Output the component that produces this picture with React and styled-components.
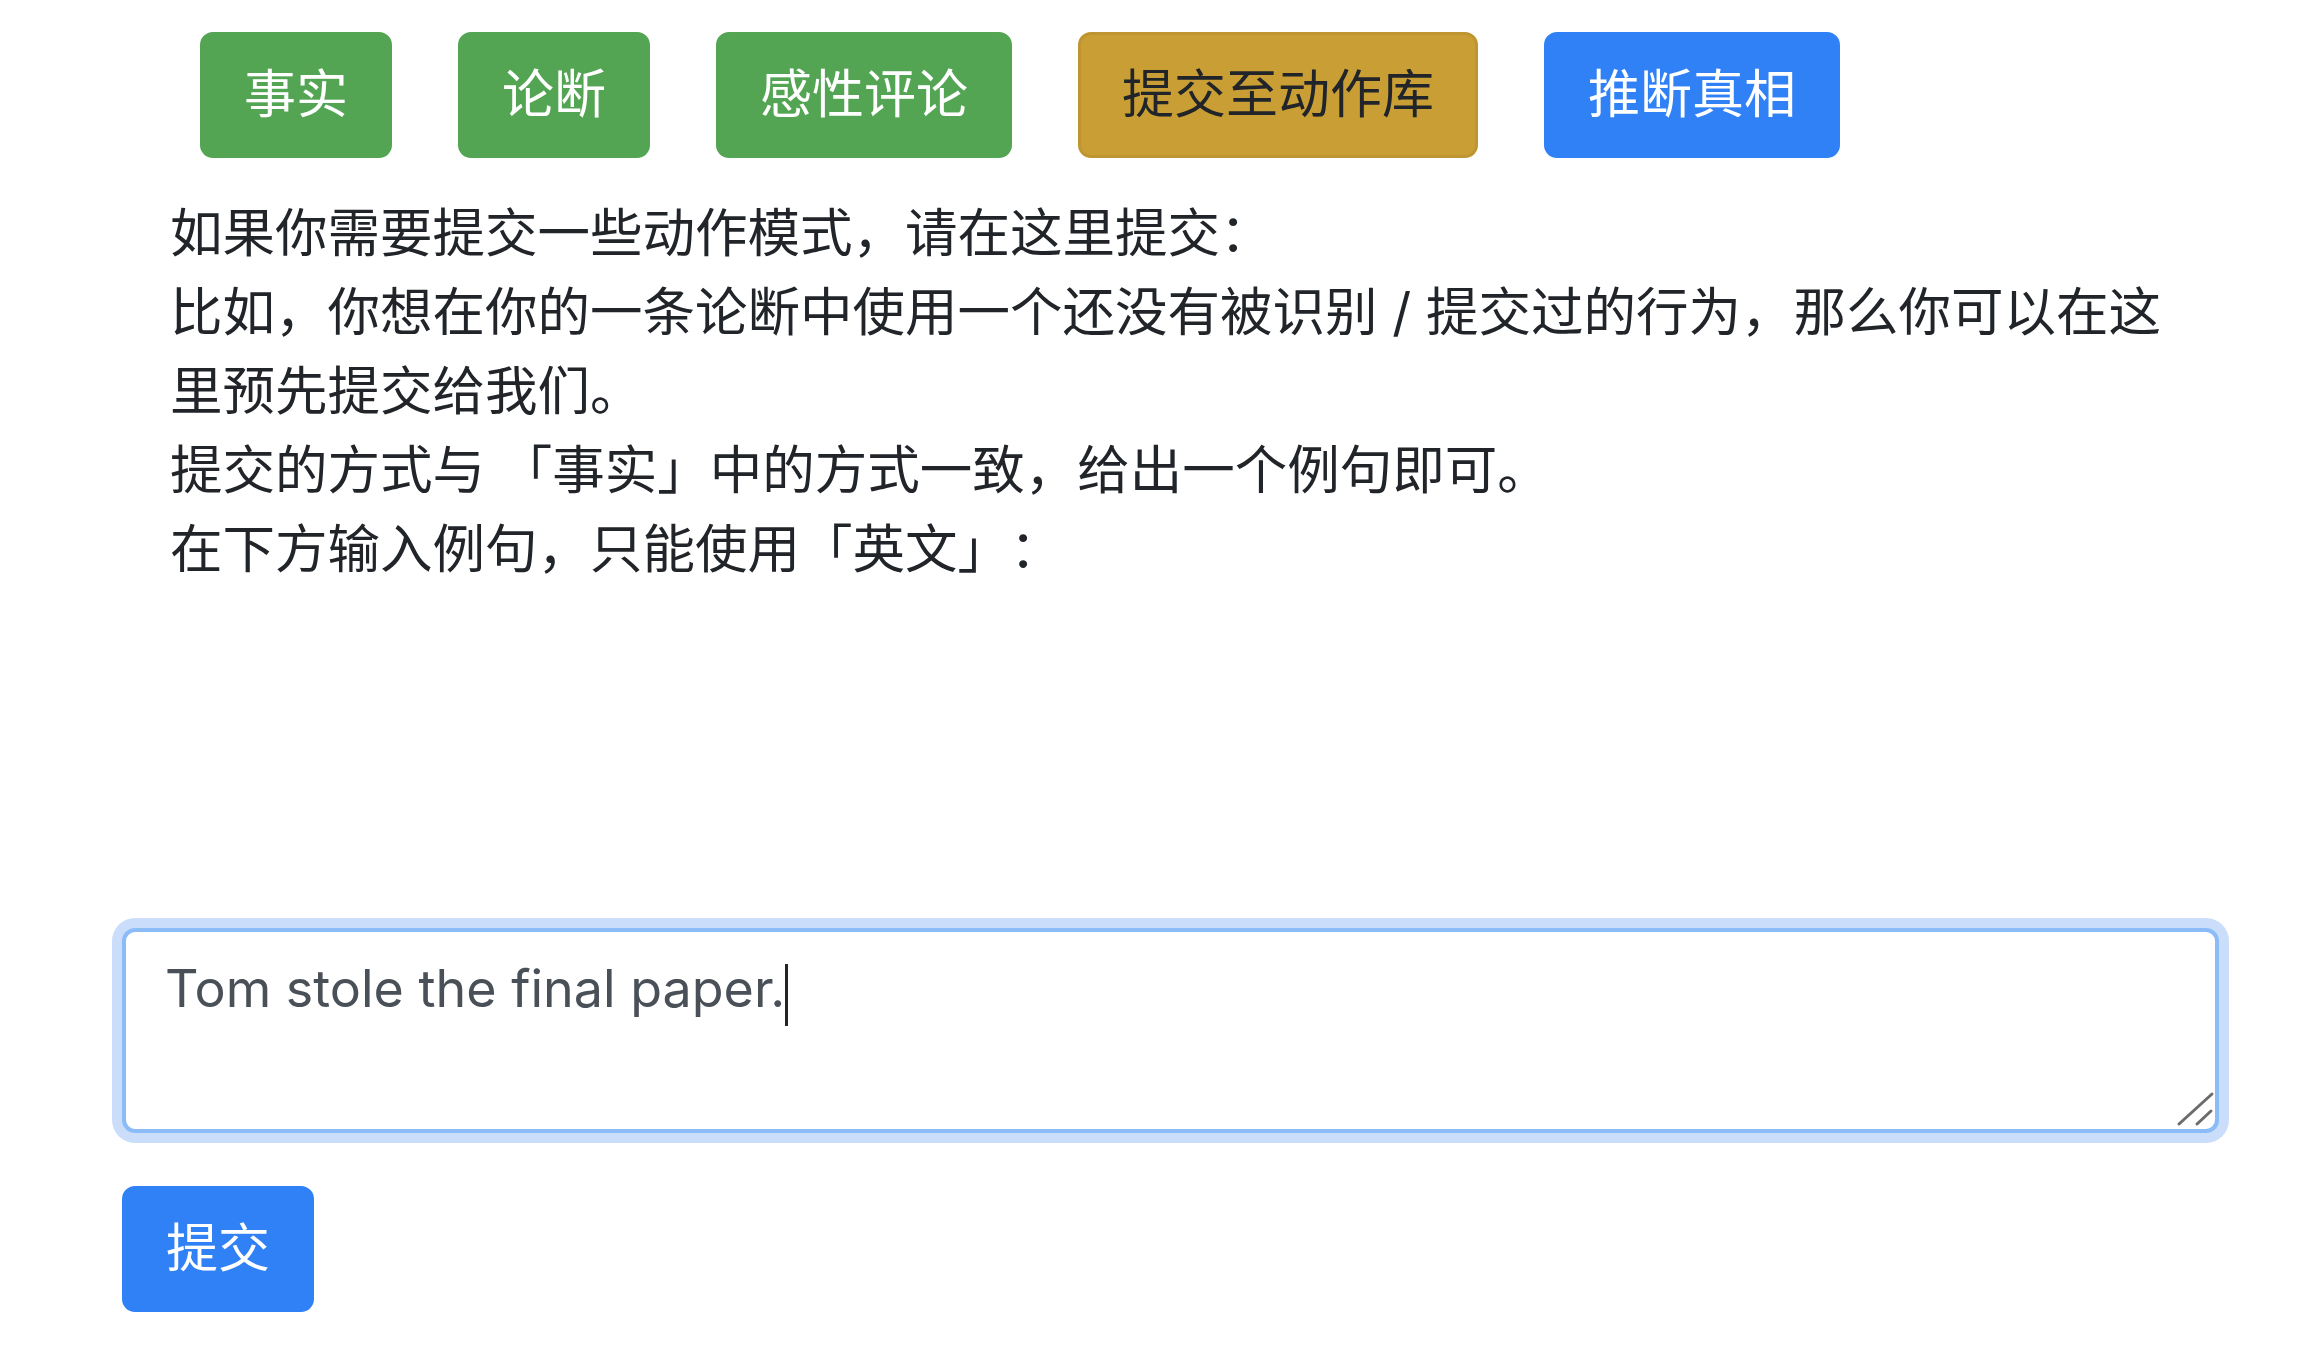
import React from "react";
import styled, { createGlobalStyle } from "styled-components";

const GlobalStyle = createGlobalStyle`
  html, body {
    margin: 0;
    padding: 0;
    background: #ffffff;
  }
  body {
    font-family: Inter, "Noto Sans CJK SC", sans-serif;
    color: #212529;
    text-spacing-trim: space-all;
  }
`;

const Page = styled.div`
  width: 2097px;
  margin-left: 122px;
  padding-top: 32px;
  display: flex;
  flex-direction: column;
`;

const ButtonRow = styled.div`
  display: flex;
  gap: 66px;
  padding-left: 78px;
`;

const variants = {
  success: { bg: "#53a553", border: "#53a553", color: "#ffffff" },
  warning: { bg: "#c99e34", border: "#bf9532", color: "#212529" },
  primary: { bg: "#3080f6", border: "#3080f6", color: "#ffffff" },
};

const Button = styled.button`
  font-family: Inter, "Noto Sans CJK SC", sans-serif;
  font-size: 52px;
  line-height: 78px;
  padding: 21px 41px;
  border: 3px solid ${(p) => variants[p.$variant].border};
  background: ${(p) => variants[p.$variant].bg};
  color: ${(p) => variants[p.$variant].color};
  border-radius: 13px;
  cursor: pointer;
  white-space: nowrap;
`;

const Instructions = styled.div`
  margin-top: 36px;
  padding: 0 48px;
  font-size: 52.5px;
  line-height: 79px;
  color: #212529;
`;

const Line = styled.div``;

const Field = styled.div`
  position: relative;
  margin-top: 339px;
  width: 2097px;
  height: 205px;
`;

const TextArea = styled.textarea`
  box-sizing: border-box;
  display: block;
  width: 100%;
  height: 100%;
  margin: 0;
  padding: 17px 39px 23px;
  font-family: Inter, "Noto Sans CJK SC", sans-serif;
  font-size: 52px;
  line-height: 79px;
  color: #495057;
  background: #ffffff;
  border: 4px solid #8bbcf7;
  border-radius: 13px;
  box-shadow: 0 0 0 10px #cadefb;
  outline: none;
  caret-color: transparent;
  resize: none;
`;

const Caret = styled.span`
  position: absolute;
  left: 663px;
  top: 36px;
  width: 3px;
  height: 62px;
  background: #212529;
  pointer-events: none;
`;

const ResizeGrip = styled.svg`
  position: absolute;
  right: 4px;
  bottom: 4px;
  width: 40px;
  height: 40px;
  pointer-events: none;
`;

const SubmitRow = styled.div`
  margin-top: 53px;
  display: flex;
`;

export default function App() {
  return (
    <>
      <GlobalStyle />
      <Page>
        <ButtonRow>
          <Button $variant="success">事实</Button>
          <Button $variant="success">论断</Button>
          <Button $variant="success">感性评论</Button>
          <Button $variant="warning">提交至动作库</Button>
          <Button $variant="primary">推断真相</Button>
        </ButtonRow>
        <Instructions>
          <Line>如果你需要提交一些动作模式，请在这里提交：</Line>
          <Line>
            比如，你想在你的一条论断中使用一个还没有被识别 / 提交过的行为，那么你可以在这里预先提交给我们。
          </Line>
          <Line>提交的方式与 「事实」中的方式一致，给出一个例句即可。</Line>
          <Line>在下方输入例句，只能使用「英文」：</Line>
        </Instructions>
        <Field>
          <TextArea defaultValue="Tom stole the final paper." />
          <Caret />
          <ResizeGrip viewBox="0 0 40 40">
            <line x1="4" y1="35" x2="37" y2="5" stroke="#6b6b6b" strokeWidth="3" strokeLinecap="round" />
            <line x1="22" y1="35" x2="36" y2="22" stroke="#6b6b6b" strokeWidth="3" strokeLinecap="round" />
          </ResizeGrip>
        </Field>
        <SubmitRow>
          <Button $variant="primary">提交</Button>
        </SubmitRow>
      </Page>
    </>
  );
}
